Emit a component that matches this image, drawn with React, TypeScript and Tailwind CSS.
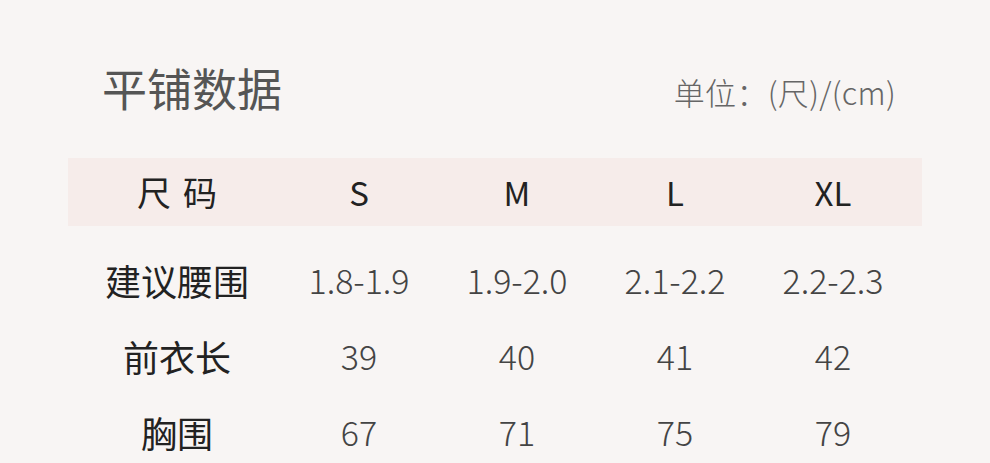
const SIZES = ["S", "M", "L", "XL"];

const ROWS = [
  { label: "建议腰围", values: ["1.8-1.9", "1.9-2.0", "2.1-2.2", "2.2-2.3"] },
  { label: "前衣长", values: ["39", "40", "41", "42"] },
  { label: "胸围", values: ["67", "71", "75", "79"] },
];

const GRID = "grid grid-cols-[218px_158px_158px_158px_158px]";

export default function App() {
  return (
    <div
      className="w-[990px] h-[463px] overflow-hidden bg-[#f8f5f4] px-[68px]"
      style={{ fontFamily: '"Noto Sans CJK SC", "Noto Sans", sans-serif' }}
    >
      <div className="flex items-center justify-between pl-[34px] pr-[26px] pt-[54px] h-[120px]">
        <h1 className="text-[45px] leading-none text-[#555]">平铺数据</h1>
        <span className="text-[31px] leading-none text-[#666] font-light pt-[8px] tracking-[0.01em]">
          单位：(尺)/(cm)
        </span>
      </div>

      <div className={`${GRID} mt-[38px] h-[68px] items-center bg-[#f6ecea] text-[#222]`}>
        <div className="text-center text-[34px] leading-none tracking-[0.35em] pl-[0.35em]">尺码</div>
        {SIZES.map((s) => (
          <div key={s} className="text-center text-[33px] leading-none pr-3">
            {s}
          </div>
        ))}
      </div>

      <div className="mt-[16px]">
        {ROWS.map((row) => (
          <div key={row.label} className={`${GRID} h-[76px] items-center`}>
            <div className="text-center text-[36px] leading-none text-[#222]">{row.label}</div>
            {row.values.map((v, i) => (
              <div key={i} className="text-center text-[34px] leading-none font-light text-[#444] pr-3">
                {v}
              </div>
            ))}
          </div>
        ))}
      </div>
    </div>
  );
}
